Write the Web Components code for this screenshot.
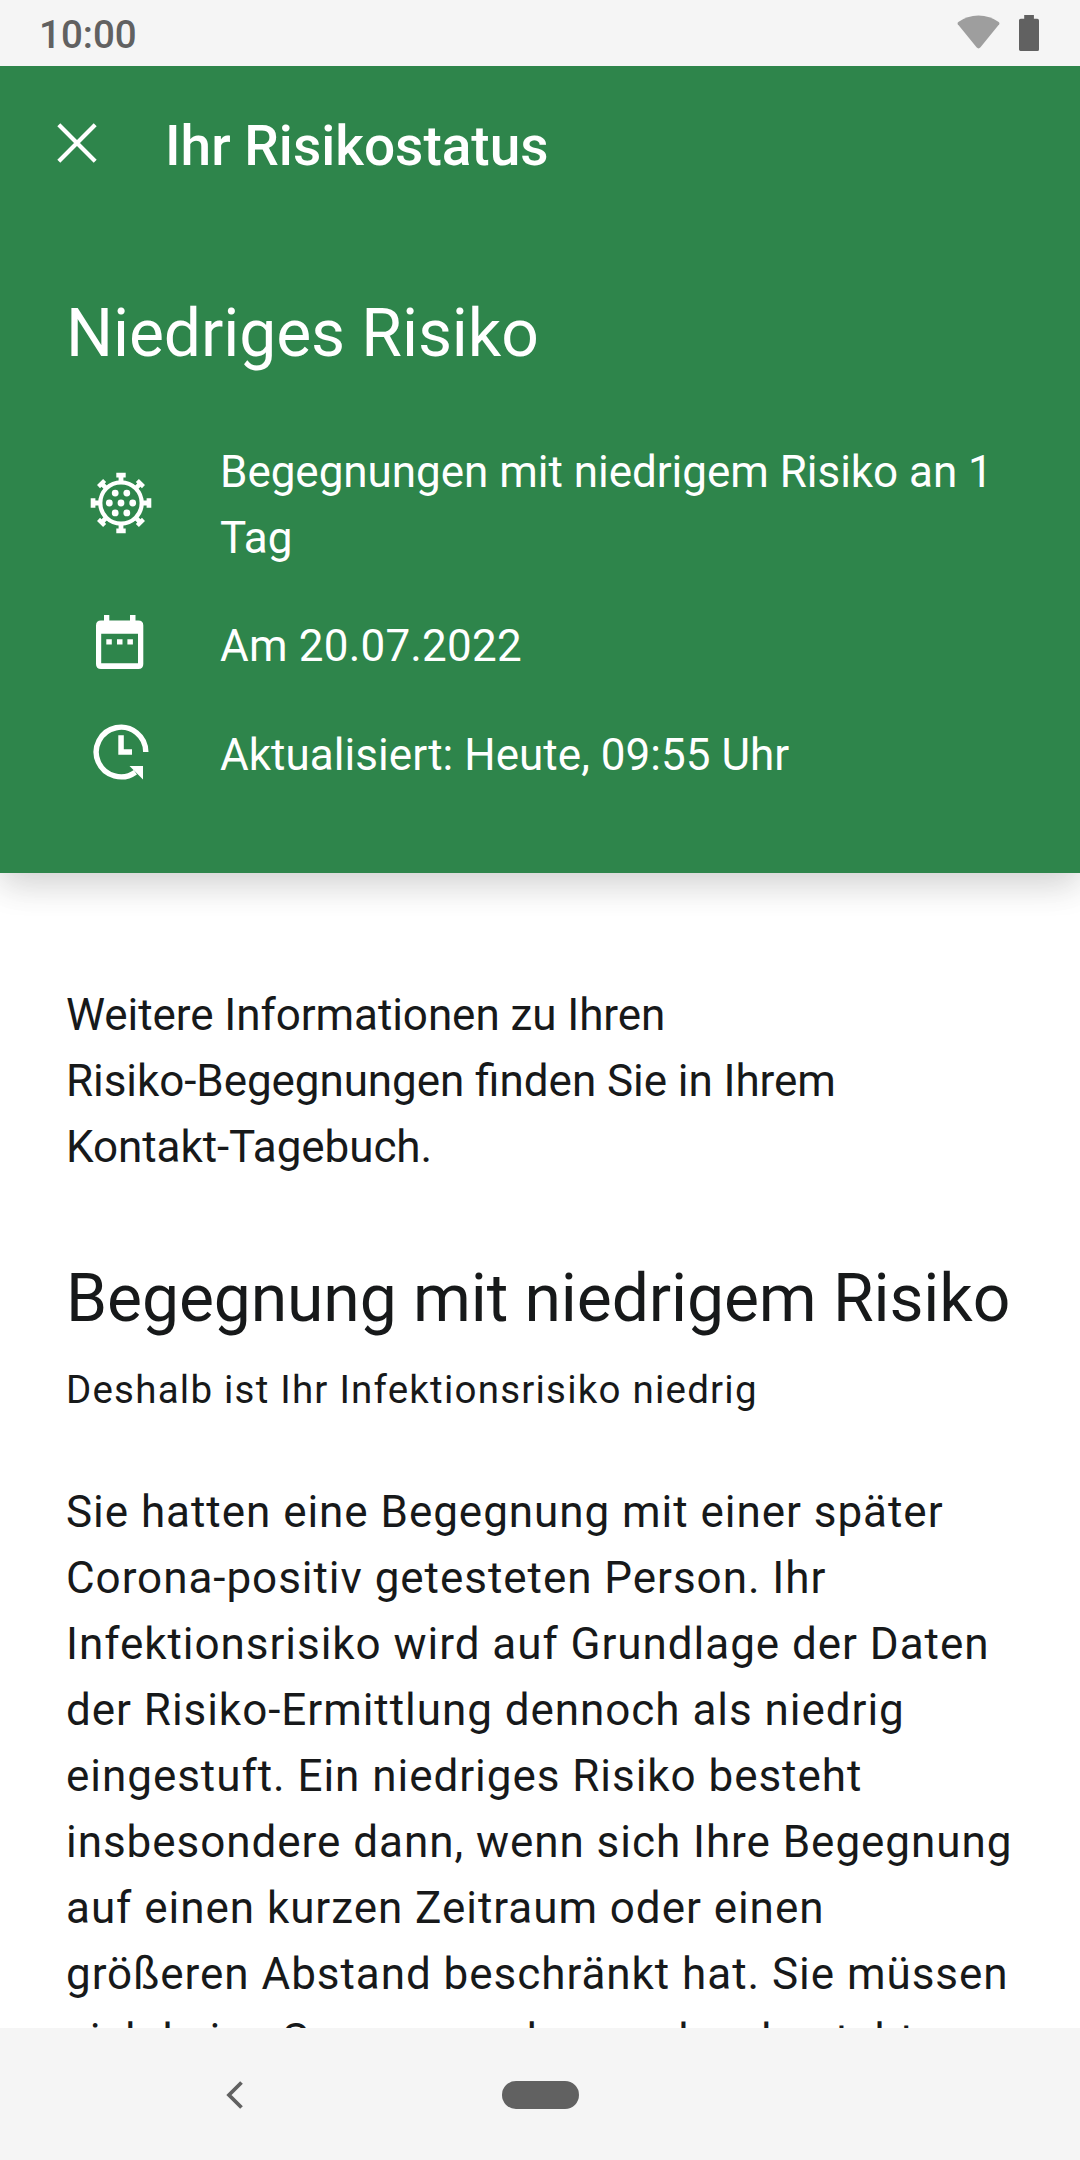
<!DOCTYPE html>
<html lang="de">
<head>
<meta charset="utf-8">
<title>Ihr Risikostatus</title>
<style>
html,body{margin:0;padding:0;height:2160px;overflow:hidden;background:#fff}
body{font-family:Roboto,"Liberation Sans",sans-serif}
</style>
</head>
<body>
<risk-screen></risk-screen>
<script>
function define(name, html) {
  const t = document.createElement('template');
  t.innerHTML = html;
  customElements.define(name, class extends HTMLElement {
    constructor() {
      super();
      this.attachShadow({mode: 'open'}).appendChild(t.content.cloneNode(true));
    }
  });
}

define('status-bar', `
<style>
:host{display:flex;box-sizing:border-box;height:66px;padding:0 41px 0 39px;justify-content:space-between;align-items:center;background:#f5f5f5;color:#616161;font-size:38.5px;font-weight:500;line-height:66px}
.time{padding-top:4px}
.icons{display:flex;align-items:flex-start;height:66px;gap:19px}
svg{display:block}
</style>
<span class="time">10:00</span>
<span class="icons">
<svg width="43" height="66" viewBox="957 0 43 66"><path d="M957.8 24.2Q957 23 958.300 22Q967 15.400 978.500 15.400T998.700 22Q1000 23 999.200 24.200L980.500 47.300Q978.500 49.500 976.500 47.300Z" fill="#9e9e9e"/></svg>
<svg width="20" height="66" viewBox="1019 0 20 66"><path d="M1024.200 15h9.700v3.700h3.400q1.700 0 1.700 1.700v29q0 1.500-1.500 1.500h-17q-1.500 0-1.500-1.500v-29q0-1.700 1.700-1.700h3.500z" fill="#616161"/></svg>
</span>`);

define('tool-bar', `
<style>
:host{display:flex;height:154px;align-items:center;padding-left:55px;gap:66px;font-size:55px;font-weight:500;line-height:66px}
svg{display:block;width:44px;height:44px}
.title{padding-top:5px}
</style>
<svg viewBox="0 0 44 44"><path d="M3.800 3.800L40.200 40.200M40.200 3.800L3.800 40.200" stroke="#fff" stroke-width="4.200" fill="none"/></svg>
<span class="title"><slot></slot></span>`);

define('risk-row', `
<style>
:host{display:flex;align-items:center;gap:66px;padding-left:22px;font-size:44px;line-height:66px}
.icon{display:flex;flex:none}
.text{white-space:nowrap}
</style>
<span class="icon"><slot name="icon"></slot></span>
<span class="text"><slot></slot></span>`);

define('icon-virus', `
<style>:host{display:block;width:66px;height:66px;margin-bottom:5px}svg{display:block}</style>
<svg width="66" height="66" viewBox="-33 -33 66 66" fill="#fff">
<defs><path id="s" d="M-4.700-30.300h9.400v4.700h-2.300v4.600h-4.800v-4.600h-2.300z"/><path id="d" d="M-4.300-29.600h8.600v4.300h-2v4.300h-4.600v-4.300h-2z"/></defs>
<circle r="20.700" fill="none" stroke="#fff" stroke-width="4.200"/>
<use href="#s"/><use href="#s" transform="rotate(90)"/><use href="#s" transform="rotate(180)"/><use href="#s" transform="rotate(270)"/>
<use href="#d" transform="rotate(45)"/><use href="#d" transform="rotate(135)"/><use href="#d" transform="rotate(225)"/><use href="#d" transform="rotate(315)"/>
<circle r="3.400"/><circle cx="-11.700" r="3.400"/><circle cx="11.700" r="3.400"/>
<circle cx="-5.800" cy="-9.900" r="3.400"/><circle cx="5.800" cy="-9.900" r="3.400"/><circle cx="-5.800" cy="9.900" r="3.400"/><circle cx="5.800" cy="9.900" r="3.400"/>
</svg>`);

define('icon-calendar', `
<style>:host{display:block;width:66px;height:66px;margin-bottom:5px}svg{display:block}</style>
<svg width="66" height="66" viewBox="28 20 66 66" fill="#fff">
<path fill-rule="evenodd" d="M44 25h5.300v5.500H70V25h5.500v5.500h2.800q5 0 5 5V74q0 5-5 5H41q-5 0-5-5V35.500q0-5 5-5h3zM41.200 43.700v29.600H78V43.700z"/>
<path d="M46.300 49.200h5.500v5.400h-5.500zM57 49.200h5.500v5.400H57zM67.400 49.200h5.500v5.400h-5.500z"/>
</svg>`);

define('icon-updated', `
<style>:host{display:block;width:66px;height:66px;margin-bottom:5px}svg{display:block}</style>
<svg width="66" height="66" viewBox="28 129 66 66">
<path d="M85.800 162A24.800 24.800 0 1 0 75.400 182.200" fill="none" stroke="#fff" stroke-width="5.400"/>
<path d="M69.500 176H83v13.500z" fill="#fff"/>
<path d="M58.300 145.300h5.500v14H72v5.500H58.300z" fill="#fff"/>
</svg>`);

define('risk-header', `
<style>
:host{display:block;box-sizing:border-box;height:807px;background:#2e854b;color:#fff;position:relative;box-shadow:0 12px 32px rgba(0,0,0,.14),0 6px 44px rgba(0,0,0,.06)}
.card{display:flex;flex-direction:column;padding:73px 66px 0;gap:0}
h1{margin:0;font-size:66px;font-weight:400;line-height:82px;letter-spacing:-.09px}
.rows{display:flex;flex-direction:column;gap:39px;padding-top:64px}
.encounter{letter-spacing:-.03px}
.date{letter-spacing:.2px}
.updated{margin-top:-1px;letter-spacing:.04px}
</style>
<tool-bar>Ihr Risikostatus</tool-bar>
<div class="card">
<h1>Niedriges Risiko</h1>
<div class="rows">
<risk-row class="encounter"><icon-virus slot="icon"></icon-virus>Begegnungen mit niedrigem Risiko an 1<br>Tag</risk-row>
<risk-row class="date"><icon-calendar slot="icon"></icon-calendar>Am 20.07.2022</risk-row>
<risk-row class="updated"><icon-updated slot="icon"></icon-updated>Aktualisiert: Heute, 09:55 Uhr</risk-row>
</div>
</div>`);

define('risk-details', `
<style>
:host{display:block;flex:1;min-height:0;overflow:hidden;box-sizing:border-box;padding:109px 0 0 66px;color:#17191a;white-space:nowrap}
p,h2{margin:0;font-weight:400}
.info{font-size:44px;line-height:66px;letter-spacing:-.07px;font-variant-ligatures:common-ligatures}
h2{font-size:66px;line-height:82px;padding-top:78px;letter-spacing:-.1px}
.sub{font-size:38.500px;line-height:50px;letter-spacing:1.220px;padding-top:25px}
.text{font-size:44px;line-height:66px;letter-spacing:.960px;padding-top:64px}
</style>
<p class="info">Weitere Informationen zu Ihren<br>Risiko-Begegnungen <span style="letter-spacing:0">finden</span> Sie in Ihrem<br>Kontakt-Tagebuch.</p>
<h2>Begegnung mit niedrigem Risiko</h2>
<p class="sub">Deshalb ist Ihr Infektionsrisiko niedrig</p>
<p class="text">Sie hatten eine Begegnung mit einer später<br>Corona-positiv getesteten Person. Ihr<br>Infektionsrisiko wird auf Grundlage der Daten<br>der Risiko-Ermittlung dennoch als niedrig<br>eingestuft. Ein niedriges Risiko besteht<br>insbesondere dann, wenn sich Ihre Begegnung<br>auf einen kurzen Zeitraum oder einen<br>größeren Abstand beschränkt hat. Sie müssen<br>sich keine Sorgen machen und es besteht</p>`);

define('nav-bar', `
<style>
:host{display:flex;height:132px;flex:none;align-items:center;background:#f5f5f5;padding-left:226px}
svg{display:block;margin-top:1px}
.pill{width:77px;height:28px;border-radius:14px;background:#616161;margin:1px 0 0 258px}
</style>
<svg width="18" height="28" viewBox="0 0 18 28"><path d="M15.500 1.500L3 14L15.500 26.500" fill="none" stroke="#616161" stroke-width="3.800"/></svg>
<span class="pill"></span>`);

define('risk-screen', `
<style>:host{display:flex;flex-direction:column;width:1080px;height:2160px;overflow:hidden;background:#fff}
status-bar,risk-header{flex:none}
status-bar{position:relative;z-index:1}</style>
<status-bar></status-bar>
<risk-header></risk-header>
<risk-details></risk-details>
<nav-bar></nav-bar>`);
</script>
</body>
</html>
